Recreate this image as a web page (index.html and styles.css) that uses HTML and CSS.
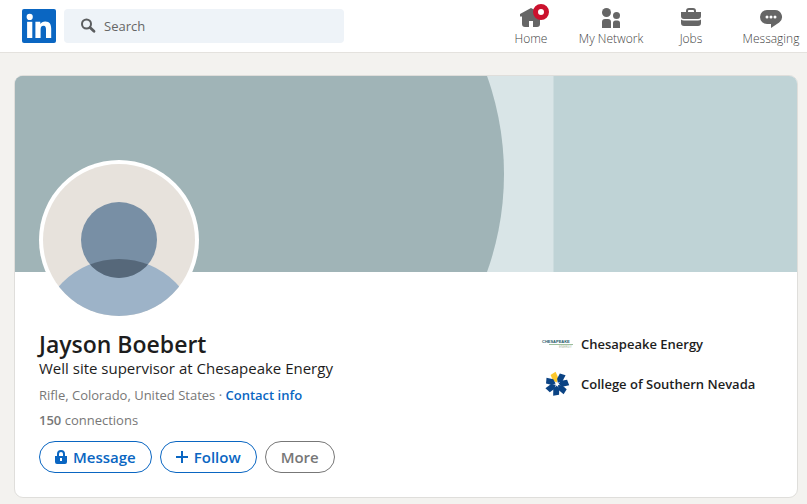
FILE: index.html
```html
<!DOCTYPE html>
<html lang="en">
<head>
<meta charset="utf-8">
<meta name="viewport" content="width=device-width, initial-scale=1">
<title>Jayson Boebert | LinkedIn</title>
<link rel="stylesheet" href="styles.css">
</head>
<body>
<header class="topbar">
  <a class="logo" href="#" aria-label="LinkedIn">
    <svg viewBox="0 0 34 34" width="34" height="34">
      <rect width="34" height="34" rx="2" fill="#0a66c2"/>
      <g fill="#fff">
        <circle cx="7.700" cy="7.900" r="3.100"/>
        <rect x="5.100" y="12.800" width="5.200" height="16.200"/>
        <path d="M13.400 12.800h4.900V15c.9-1.500 2.600-2.600 4.900-2.600 4.800 0 6 3.100 6 7.300V29H24v-8.300c0-2.100-.3-3.900-2.500-3.900s-2.900 1.600-2.900 3.900V29h-5.200z"/>
      </g>
    </svg>
  </a>
  <label class="search">
    <svg viewBox="0 0 16 16" width="16" height="16" fill="none" stroke="#5b5d5f">
      <circle cx="6.500" cy="6" r="4.500" stroke-width="2"/>
      <path d="M10 9.500l4 3.700" stroke-width="2.800" stroke-linecap="round"/>
    </svg>
    <input type="search" placeholder="Search" aria-label="Search">
  </label>
  <nav class="nav">
    <a class="nav-item" href="#">
      <span class="nav-icon">
        <svg viewBox="0 0 24 24" width="24" height="24" fill="#666">
          <path d="M12 2L1 8v2.500h2V18a3 3 0 0 0 3 3h4v-6h4v6h4a3 3 0 0 0 3-3v-7.500h2V8z"/>
        </svg>
        <span class="badge"></span>
      </span>
      Home
    </a>
    <a class="nav-item" href="#">
      <span class="nav-icon">
        <svg viewBox="0 0 24 24" width="24" height="24" fill="#666">
          <circle cx="7.500" cy="6.500" r="4.500"/>
          <path d="M3 22v-6a3 3 0 0 1 3-3h3a3 3 0 0 1 3 3v6z"/>
          <circle cx="17.500" cy="9.500" r="3.500"/>
          <path d="M14 22v-5a2.500 2.500 0 0 1 2.500-2.500h2A2.500 2.500 0 0 1 21 17v5z"/>
        </svg>
      </span>
      My Network
    </a>
    <a class="nav-item" href="#">
      <span class="nav-icon">
        <svg viewBox="0 0 24 24" width="24" height="24" fill="#666">
          <path fill-rule="evenodd" d="M17 6V5a3 3 0 0 0-3-3h-4a3 3 0 0 0-3 3v1H2v4a3 3 0 0 0 3 3h14a3 3 0 0 0 3-3V6zM9 5a1 1 0 0 1 1-1h4a1 1 0 0 1 1 1v1H9z"/>
          <path d="M19 14.500H5a5 5 0 0 1-3-1V17a3 3 0 0 0 3 3h14a3 3 0 0 0 3-3v-3.500a5 5 0 0 1-3 1z"/>
        </svg>
      </span>
      Jobs
    </a>
    <a class="nav-item" href="#">
      <span class="nav-icon">
        <svg viewBox="0 0 24 24" width="24" height="24">
          <path fill="#666" d="M16 4H8a7 7 0 0 0 0 14h4v4l8.200-5.400A7 7 0 0 0 16 4z"/>
          <g fill="#fff"><circle cx="8" cy="11" r="1.500"/><circle cx="12" cy="11" r="1.500"/><circle cx="16" cy="11" r="1.500"/></g>
        </svg>
      </span>
      Messaging
    </a>
  </nav>
</header>

<main class="card">
  <svg class="banner" viewBox="0 0 782 196" preserveAspectRatio="xMidYMid slice" aria-hidden="true">
    <rect width="782" height="196" fill="#d9e5e7"/>
    <rect x="538.500" width="244" height="196" fill="#bfd3d6"/>
    <circle cx="198" cy="98" r="291" fill="#a0b4b7"/>
    <rect width="60" height="196" fill="#a0b4b7"/>
  </svg>
  <div class="profile">
    <svg class="avatar" viewBox="0 0 160 160" role="img" aria-label="Profile photo">
      <defs>
        <clipPath id="face"><circle cx="80" cy="80" r="76"/></clipPath>
        <clipPath id="head"><circle cx="80" cy="80" r="38"/></clipPath>
      </defs>
      <circle cx="80" cy="80" r="80" fill="#fff"/>
      <circle cx="80" cy="80" r="76" fill="#e7e2dc"/>
      <circle cx="80" cy="179" r="80" fill="#9db3c8" clip-path="url(#face)"/>
      <circle cx="80" cy="80" r="38" fill="#788fa5"/>
      <circle cx="80" cy="179" r="80" fill="#56687a" clip-path="url(#head)"/>
    </svg>
    <div class="columns">
      <section class="intro">
        <h1>Jayson Boebert</h1>
        <p class="headline">Well site supervisor at Chesapeake Energy</p>
        <p class="meta">Rifle, Colorado, United States · <a href="#">Contact info</a></p>
        <p class="meta"><b>150</b> connections</p>
        <div class="actions">
          <button class="btn" type="button">
            <svg viewBox="0 0 12 14" width="12" height="14">
              <path fill="none" stroke="#0a66c2" stroke-width="2" d="M3 7V4a3 3 0 0 1 6 0v3"/>
              <path fill="#0a66c2" fill-rule="evenodd" d="M0 6h12v6a2 2 0 0 1-2 2H2a2 2 0 0 1-2-2zM5 8v3h2V8z"/>
            </svg>
            Message
          </button>
          <button class="btn" type="button">
            <svg viewBox="0 0 12 12" width="12" height="12">
              <path stroke="#0a66c2" stroke-width="2" d="M6 0v12M0 6h12"/>
            </svg>
            Follow
          </button>
          <button class="btn btn-muted" type="button">More</button>
        </div>
      </section>
      <ul class="orgs">
        <li>
          <svg viewBox="0 0 32 32" width="32" height="32" aria-hidden="true">
            <text class="mark-name" x="1" y="15" fill="#1c5a68">CHESAPEAKE</text>
            <path d="M8 16.500h24" stroke="#9dbf9c"/>
            <text class="mark-sub" x="18" y="20" fill="#9eb59a">ENERGY</text>
          </svg>
          Chesapeake Energy
        </li>
        <li>
          <svg viewBox="0 0 32 32" width="32" height="32" aria-hidden="true">
            <defs><path id="petal" d="M0-1.500L3.200-5 2.600-12-3.200-10.500-2.700-4.500z"/></defs>
            <g transform="translate(16 16)" fill="#0b4384">
              <use href="#petal" transform="rotate(-19)" fill="#fcc72c"/>
              <use href="#petal" transform="rotate(32)"/>
              <use href="#petal" transform="rotate(84)"/>
              <use href="#petal" transform="rotate(135)"/>
              <use href="#petal" transform="rotate(186)"/>
              <use href="#petal" transform="rotate(238)"/>
              <use href="#petal" transform="rotate(289)"/>
            </g>
          </svg>
          College of Southern Nevada
        </li>
      </ul>
    </div>
  </div>
</main>
</body>
</html>
```
FILE: styles.css
```css
* {
  box-sizing: border-box;
}

body {
  margin: 0;
  background: #f3f2ef;
  color: #1d1d1d;
  font-family: "Open Sans", "Noto Sans", sans-serif;
  font-size: 13px;
}

svg {
  display: block;
  flex: none;
}

h1,
p,
ul {
  margin: 0;
  padding: 0;
}

a {
  text-decoration: none;
}

.topbar {
  display: flex;
  align-items: center;
  gap: 8px;
  height: 53px;
  padding-left: 22px;
  overflow: hidden;
  background: #fff;
  border-bottom: 1px solid #e4e2de;
}

.search {
  display: flex;
  align-items: center;
  gap: 8px;
  width: 280px;
  height: 34px;
  padding: 0 16px;
  border-radius: 4px;
  background: #eef3f8;
}

.search input {
  flex: 1;
  min-width: 0;
  padding: 0;
  border: 0;
  outline: 0;
  background: none;
  font: inherit;
}

.search input::placeholder {
  color: #666;
  opacity: 1;
}

.nav {
  display: flex;
  margin-left: auto;
  margin-right: -4px;
}

.nav-item {
  display: flex;
  flex-direction: column;
  align-items: center;
  width: 80px;
  padding-top: 1px;
  color: #444;
  font-size: 12px;
  font-weight: 300;
  line-height: 17px;
}

.nav-icon {
  position: relative;
}

.badge {
  position: absolute;
  top: -2px;
  right: -6px;
  width: 16px;
  height: 16px;
  border: 5px solid #cb112d;
  border-radius: 50%;
  background: #fff;
}

.card {
  margin: 22px 9px 0 14px;
  overflow: hidden;
  border: 1px solid #dfdedb;
  border-radius: 9px;
  background: #fff;
}

.banner {
  width: 100%;
  height: 196px;
}

.profile {
  padding: 0 24px 24px;
}

.avatar {
  position: relative;
  width: 160px;
  height: 160px;
  margin-top: -112px;
}

.columns {
  display: flex;
  justify-content: space-between;
  padding-top: 8px;
}

h1 {
  font-size: 23px;
  font-weight: 600;
  line-height: 32px;
}

.headline {
  margin-bottom: 10px;
  font-size: 15px;
  line-height: 16px;
}

.meta {
  margin-top: 7px;
  color: #777;
  line-height: 18px;
}

.meta a {
  color: #0a66c2;
  font-weight: 600;
}

.meta b {
  font-weight: 600;
}

.actions {
  display: flex;
  gap: 8px;
  margin-top: 12px;
}

.btn {
  display: flex;
  align-items: center;
  gap: 6px;
  height: 32px;
  padding: 0 15px;
  border: 1px solid #0a66c2;
  border-radius: 16px;
  background: #fff;
  color: #0a66c2;
  font: 600 15px "Open Sans", "Noto Sans", sans-serif;
}

.btn-muted {
  border-color: #777;
  color: #777;
}

.orgs {
  width: 232px;
  list-style: none;
  font-weight: 600;
}

.orgs li {
  display: flex;
  align-items: center;
  gap: 8px;
  height: 32px;
  margin-bottom: 8px;
}

.mark-name {
  font: 700 4px "Liberation Sans", sans-serif;
}

.mark-sub {
  font: 400 3px "Liberation Sans", sans-serif;
}
```
